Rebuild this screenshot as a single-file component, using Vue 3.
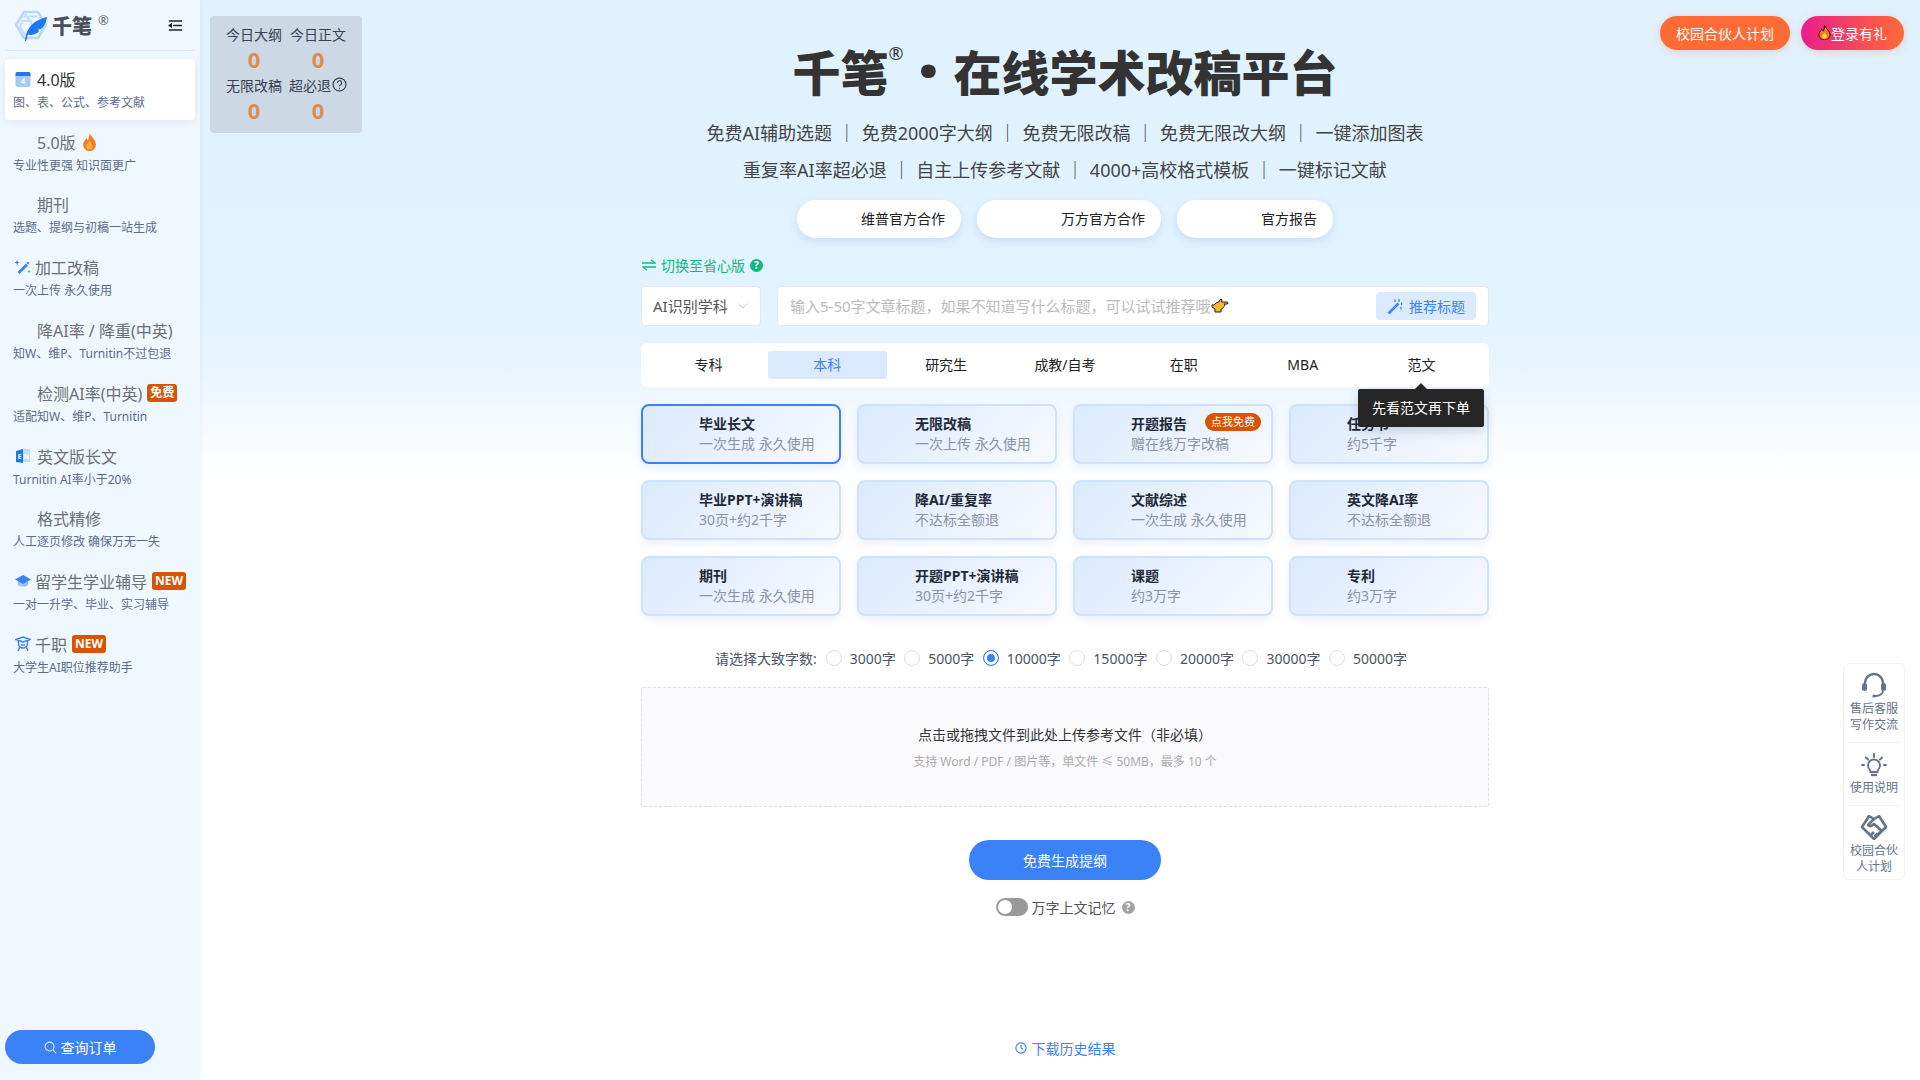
<template>
  <div class="page">
    <!-- sidebar -->
    <aside class="side">
      <div class="side__head">
        <svg class="side__logo" viewBox="0 0 32 32" width="32" height="32">
          <path d="M9 3h14l8 13-8 13H9L1 16z" fill="none" stroke="#b9d6fb" stroke-width="2.600" />
          <path d="M8 7.500h15M6 12h11M4.500 17l6 9M10 5l7 10M8 12l-3 5" fill="none" stroke="#c5ddfb" stroke-width="2.200" />
          <path d="M10 32c1-11 6-20 22-24-1 6-3 10-6 12l-3 .5 1 2c-3 3-8 4-11 3l-2 6.500z" fill="#1c78f0" />
        </svg>
        <span class="side__brand">千笔</span>
        <span class="side__reg">®</span>
        <svg class="side__fold" viewBox="0 0 14 11" width="14" height="11">
          <path d="M1 1h13M5 5.500h9M1 10h13" stroke="#222" stroke-width="1.600" fill="none" />
          <path d="M0 5.500 4 2.800v5.400z" fill="#222" />
        </svg>
      </div>

      <div
        v-for="item in navItems"
        :key="item.title"
        class="nav"
        :class="{ 'nav--active': item.active }"
      >
        <div class="nav__title">
          <span class="nav__icon" :class="{ 'nav__icon--tight': item.tight }">
            <svg v-if="item.icon === 'cal'" viewBox="0 0 16 16" width="16" height="16">
              <rect x="0.500" y="1" width="15" height="15" rx="2" fill="#a3caff" />
              <path d="M.5 3a2 2 0 0 1 2-2h11a2 2 0 0 1 2 2v2H.5z" fill="#1c78f0" />
              <text x="8" y="13" text-anchor="middle" font-size="8" font-weight="700" fill="#fff">4</text>
            </svg>
            <svg v-else-if="item.icon === 'wand'" viewBox="0 0 16 16" width="16" height="16">
              <path d="M2.500 14.500 11 6l2 2-8.500 8.500z" fill="#3b82f6" transform="translate(0 -1.500)" />
              <path d="M11.500 4 13 2.500l1.500 1.500L13 5.500zM2 1l.8 1.700L4.500 3.500l-1.700.8L2 6l-.8-1.700L-.5 3.500l1.700-.8zM14 11l.5 1 1 .5-1 .5-.5 1-.5-1-1-.5 1-.5z" fill="#3b82f6" />
            </svg>
            <svg v-else-if="item.icon === 'en'" viewBox="0 0 16 16" width="16" height="16">
              <path d="M1 3l7-2v14l-7-1z" fill="#1c78f0" />
              <path d="M8 1h7v13H8z" fill="#c3dcff" />
              <text x="4.500" y="11" text-anchor="middle" font-size="6.500" font-weight="700" fill="#fff">E</text>
              <text x="11.500" y="11" text-anchor="middle" font-size="6.500" font-weight="700" fill="#fff">N</text>
            </svg>
            <svg v-else-if="item.icon === 'cap'" viewBox="0 0 16 16" width="16" height="16">
              <path d="M3 8v4c1.500 2 8.500 2 10 0V8z" fill="#9cc3fb" />
              <path d="M8 2 16 6.500 8 11 0 6.500z" fill="#3b82f6" />
            </svg>
            <svg v-else-if="item.icon === 'job'" viewBox="0 0 16 16" width="16" height="16" fill="none" stroke="#3b82f6" stroke-width="1.500">
              <path d="M1 3.500 8 1l7 2.500L8 6z" />
              <path d="M3.500 5v2.500c0 2.500 2 4.500 4.500 4.500s4.500-2 4.500-4.500V5" />
              <path d="M5 10.500 3 15M11 10.500l2 4.500M6 9h4" />
            </svg>
          </span>
          <span class="nav__name">{{ item.title }}</span>
          <svg v-if="item.flame" class="nav__flame" viewBox="0 0 14 17" width="15" height="18">
            <path d="M7 0c1 3 6 6 6 11a6 6 0 0 1-12 0c0-3 2-4 3-6 1 1 1 2 1.500 2C6.500 5 7 3 7 0z" fill="#fb7a1d" />
            <path d="M7 7c1 2 3 3 3 5.500a3 3 0 0 1-6 0C4 10 6 9 7 7z" fill="#ffae3b" />
          </svg>
          <span v-if="item.badge" class="nav__badge">{{ item.badge }}</span>
        </div>
        <p class="nav__sub">{{ item.sub }}</p>
      </div>

      <button class="side__order">
        <svg viewBox="0 0 14 14" width="13" height="13" fill="none" stroke="#dbe9ff" stroke-width="1.200">
          <circle cx="6" cy="6" r="4.800" />
          <path d="m9.500 9.500 3.500 3.500" />
        </svg>
        查询订单
      </button>
    </aside>

    <!-- main -->
    <main class="main">
      <div class="stats">
        <template v-for="s in stats" :key="s.label">
          <div class="stats__cell">
            <span class="stats__label">
              {{ s.label }}
              <svg v-if="s.help" class="stats__help" viewBox="0 0 14 14" width="15" height="15" fill="none" stroke="#374151" stroke-width="1.100">
                <circle cx="7" cy="7" r="6" />
                <path d="M5 5.500a2 2 0 1 1 3 1.700c-.7.400-1 .800-1 1.500" />
                <path d="M7 10v1" />
              </svg>
            </span>
            <span class="stats__num">0</span>
          </div>
        </template>
      </div>

      <div class="actions">
        <button class="actions__btn actions__btn--orange">校园合伙人计划</button>
        <button class="actions__btn actions__btn--login">
          <svg viewBox="0 0 14 16" width="13" height="15">
            <path d="M7 .5c1 3 6 6 6 10a6 5.500 0 0 1-12 0c0-3 2-4 3-6 1 1 1 2 1.500 2C6.500 5 7 3 7 .5z" fill="#f4781f" stroke="#2a1208" stroke-width="1" />
            <path d="M7 8c1 1.500 2.500 2 2.500 4a2.500 2.500 0 0 1-5 0C4.500 10 6 9.500 7 8z" fill="#ffd23f" />
          </svg>
          登录有礼
        </button>
      </div>

      <div class="col">
        <h1 class="hero">千笔<sup class="hero__reg">®</sup><span class="hero__dot">·</span>在线学术改稿平台</h1>
        <p class="slogan slogan--first">免费AI辅助选题 ｜ 免费2000字大纲 ｜ 免费无限改稿 ｜ 免费无限改大纲 ｜ 一键添加图表</p>
        <p class="slogan">重复率AI率超必退 ｜ 自主上传参考文献 ｜ 4000+高校格式模板 ｜ 一键标记文献</p>

        <div class="pills">
          <div class="pill pill--a">维普官方合作</div>
          <div class="pill pill--b">万方官方合作</div>
          <div class="pill pill--b">官方报告</div>
        </div>

        <div class="swap">
          <svg viewBox="0 0 14 12" width="14" height="12" fill="none" stroke="#10b981" stroke-width="1.400">
            <path d="M0 4h13L9 .8M14 8H1l4 3.200" />
          </svg>
          <span>切换至省心版</span>
          <span class="swap__help">?</span>
        </div>

        <div class="inputs">
          <div class="select">
            <span>AI识别学科</span>
            <svg viewBox="0 0 10 6" width="10" height="6" fill="none" stroke="#c0c4cc" stroke-width="1">
              <path d="m.5.500 4.500 4.500L9.500.500" />
            </svg>
          </div>
          <div class="title-input">
            <span class="title-input__ph">输入5-50字文章标题，如果不知道写什么标题，可以试试推荐哦</span>
            <svg viewBox="0 0 18 14" width="18" height="14">
              <path d="M1 6h2l2-2 3-1 1-2.500h2L10.500 3h5.500c1.500 0 1.500 2 0 2h-3l1 1c0 1-1 1-1 1.500s-1 1-1 1.500-1 1-2 1v3H4V10L1 8z" fill="#f5b82e" stroke="#222" stroke-width="1" />
            </svg>
            <button class="title-input__btn">
              <svg viewBox="0 0 16 16" width="16" height="16" fill="none" stroke="#3b82f6" stroke-width="1.300">
                <path d="m1.500 14.500 9-9 1 1-9 9z" />
                <path d="M12 1.500v2M14.500 5v1.500M8 2v1.500M14 9.500v1.500" stroke-linecap="round" />
              </svg>
              推荐标题
            </button>
          </div>
        </div>

        <div class="tabs">
          <div
            v-for="t in tabs"
            :key="t"
            class="tab"
            :class="{ 'tab--active': t === '本科' }"
          >{{ t }}</div>
          <div class="tip">先看范文再下单</div>
        </div>

        <div class="cards">
          <div
            v-for="c in cards"
            :key="c.title"
            class="card"
            :class="{ 'card--active': c.active }"
          >
            <strong class="card__title">{{ c.title }}</strong>
            <span class="card__sub">{{ c.sub }}</span>
            <span v-if="c.chip" class="card__chip">{{ c.chip }}</span>
          </div>
        </div>

        <div class="words">
          <span class="words__label">请选择大致字数:</span>
          <div v-for="w in wordCounts" :key="w" class="radio">
            <span class="radio__dot" :class="{ 'radio__dot--on': w === 10000 }"></span>
            <span>{{ w }}字</span>
          </div>
        </div>

        <div class="upload">
          <p class="upload__main">点击或拖拽文件到此处上传参考文件（非必填）</p>
          <p class="upload__hint">支持 Word / PDF / 图片等，单文件 ≤ 50MB，最多 10 个</p>
        </div>

        <button class="go">免费生成提纲</button>

        <div class="memory">
          <span class="memory__toggle"><i></i></span>
          <span>万字上文记忆</span>
          <span class="memory__help">?</span>
        </div>

        <div class="history">
          <svg viewBox="0 0 14 14" width="12" height="12" fill="none" stroke="#3b82f6" stroke-width="1.300">
            <circle cx="7" cy="7" r="6" />
            <path d="M7 3.500V7l2.500 1.500" />
          </svg>
          下载历史结果
        </div>
      </div>

      <!-- right floating tools -->
      <div class="tools">
        <div class="tools__item">
          <svg viewBox="0 0 26 26" width="26" height="26" fill="none">
            <path d="M4 14V11a9 9 0 0 1 18 0v3" stroke="#64748b" stroke-width="2.400" />
            <rect x="1" y="11" width="5" height="8" rx="2.500" fill="#64748b" />
            <rect x="20" y="11" width="5" height="8" rx="2.500" fill="#64748b" />
            <path d="M22 18c0 4-3 6-8 6" stroke="#64748b" stroke-width="1.800" />
            <circle cx="13" cy="24" r="1.600" fill="#64748b" />
          </svg>
          <span>售后客服<br />写作交流</span>
        </div>
        <div class="tools__item">
          <svg viewBox="0 -2 26 26" width="26" height="26" fill="none" stroke="#64748b">
            <path d="M9.500 19c0-2.500-2.500-3.500-2.500-6.500a6 6 0 0 1 12 0c0 3-2.500 4-2.500 6.500z" stroke-width="1.800" />
            <path d="M10 22h6" stroke-width="2.400" />
            <path d="M13 1v3M3 12H1M25 12h-2M5 4.500l2 2M21 4.500l-2 2" stroke-width="2" stroke-linecap="round" />
          </svg>
          <span>使用说明</span>
        </div>
        <div class="tools__item">
          <svg viewBox="0 0 28 26" width="28" height="26" fill="none" stroke="#64748b" stroke-width="2.600" stroke-linejoin="round">
            <path d="M14 25 2 13 9 2l5 3 5-3 7 11z" />
            <path d="M14 5 8 11c2 2 4 1 6-1l8 7M11 21l3-3M14.500 22.500l3-3M18 20l3-2.500" />
          </svg>
          <span>校园合伙<br />人计划</span>
        </div>
      </div>
    </main>
  </div>
</template>

<script setup>
const navItems = [
  { title: '4.0版', sub: '图、表、公式、参考文献', icon: 'cal', active: true },
  { title: '5.0版', sub: '专业性更强 知识面更广', flame: true },
  { title: '期刊', sub: '选题、提纲与初稿一站生成' },
  { title: '加工改稿', sub: '一次上传 永久使用', icon: 'wand', tight: true },
  { title: '降AI率 / 降重(中英)', sub: '知W、维P、Turnitin不过包退' },
  { title: '检测AI率(中英)', sub: '适配知W、维P、Turnitin', badge: '免费' },
  { title: '英文版长文', sub: 'Turnitin AI率小于20%', icon: 'en' },
  { title: '格式精修', sub: '人工逐页修改 确保万无一失' },
  { title: '留学生学业辅导', sub: '一对一升学、毕业、实习辅导', icon: 'cap', badge: 'NEW', tight: true },
  { title: '千职', sub: '大学生AI职位推荐助手', icon: 'job', badge: 'NEW', tight: true },
]

const stats = [
  { label: '今日大纲' },
  { label: '今日正文' },
  { label: '无限改稿' },
  { label: '超必退', help: true },
]

const tabs = ['专科', '本科', '研究生', '成教/自考', '在职', 'MBA', '范文']

const cards = [
  { title: '毕业长文', sub: '一次生成 永久使用', active: true },
  { title: '无限改稿', sub: '一次上传 永久使用' },
  { title: '开题报告', sub: '赠在线万字改稿', chip: '点我免费' },
  { title: '任务书', sub: '约5千字' },
  { title: '毕业PPT+演讲稿', sub: '30页+约2千字' },
  { title: '降AI/重复率', sub: '不达标全额退' },
  { title: '文献综述', sub: '一次生成 永久使用' },
  { title: '英文降AI率', sub: '不达标全额退' },
  { title: '期刊', sub: '一次生成 永久使用' },
  { title: '开题PPT+演讲稿', sub: '30页+约2千字' },
  { title: '课题', sub: '约3万字' },
  { title: '专利', sub: '约3万字' },
]

const wordCounts = [3000, 5000, 10000, 15000, 20000, 30000, 50000]
</script>

<style>
html, body { margin: 0; background: #fff; }
</style>

<style scoped>
.page {
  display: flex;
  width: 1920px;
  height: 1080px;
  overflow: hidden;
  font-family: "Noto Sans", "Noto Sans CJK SC", sans-serif;
  font-size: 14px;
  color: #333;
}
p, h1 { margin: 0; }
button { font-family: inherit; border: none; cursor: pointer; }

/* sidebar */
.side {
  width: 200px;
  flex: none;
  box-sizing: border-box;
  padding: 0 5px 16px;
  display: flex;
  flex-direction: column;
  gap: 1.800px;
  background: #f0f8ff;
  box-shadow: 1px 0 4px rgba(0, 0, 0, 0.04);
  z-index: 1;
}
.side__head {
  display: flex;
  align-items: center;
  height: 50px;
  flex: none;
  margin-bottom: 6px;
  padding-left: 10px;
  border-bottom: 1px solid #e3e8ee;
}
.side__brand { margin-left: 5px; font-size: 20px; font-weight: 900; color: #4a4f57; }
.side__reg { margin: -10px 0 0 6px; font-size: 13px; color: #666; }
.side__fold { margin-left: auto; margin-right: 13px; }

.nav {
  height: 61px;
  flex: none;
  box-sizing: border-box;
  padding: 8px 8px 0;
  border-radius: 4px;
}
.nav--active {
  background: #fff;
  box-shadow: 0 2px 8px rgba(80, 110, 150, 0.12);
}
.nav__title {
  display: flex;
  align-items: center;
  height: 24px;
  font-size: 16px;
  color: #6b6f76;
  white-space: nowrap;
}
.nav--active .nav__title { color: #333; }
.nav__icon { display: flex; width: 24px; height: 16px; flex: none; margin-left: 2px; margin-right: -2px; }
.nav__icon--tight { margin-right: -4px; margin-left: 2px; }
.nav__flame { margin-left: 6px; }
.nav__badge {
  margin-left: 5px;
  padding: 0 3px;
  height: 18px;
  line-height: 18px;
  border-radius: 3px;
  background: #d95300;
  color: #fff;
  font-size: 12px;
  font-weight: 700;
}
.nav__sub {
  margin-top: 3px;
  font-size: 12px;
  line-height: 18px;
  color: #5b6b8c;
  white-space: nowrap;
}
.side__order {
  margin-top: auto;
  width: 150px;
  height: 34px;
  flex: none;
  display: flex;
  align-items: center;
  justify-content: center;
  gap: 4px;
  padding-bottom: 1px;
  border-radius: 17px;
  background: #3b82f6;
  color: #fff;
  font-size: 14px;
}

/* main */
.main {
  position: relative;
  flex: 1;
  background: linear-gradient(180deg, #e0f2fe 0, #e2f3ff 300px, #e6f4ff 360px, #f0f8ff 400px, #f9fcff 445px, #fff 490px);
}
.col {
  width: 848px;
  margin-left: 441px;
  display: flex;
  flex-direction: column;
  align-items: center;
}

.stats {
  position: absolute;
  left: 10px;
  top: 16px;
  width: 152px;
  height: 117px;
  box-sizing: border-box;
  padding: 5px 0 0;
  display: grid;
  grid-template-columns: 64px 64px;
  justify-content: center;
  align-content: start;
  border-radius: 4px;
  background: #ccd9e5;
}
.stats__cell { display: flex; flex-direction: column; align-items: center; }
.stats__label { display: flex; align-items: center; height: 25px; color: #374151; white-space: nowrap; }
.stats__help { margin-left: 1px; }
.stats__num { height: 25px; line-height: 25px; margin-top: 1px; font-size: 22px; font-weight: 700; color: #e08a4e; }

.actions {
  position: absolute;
  right: 16px;
  top: 16px;
  display: flex;
  gap: 11px;
}
.actions__btn {
  height: 34px;
  display: flex;
  align-items: center;
  justify-content: center;
  padding-bottom: 2px;
  border-radius: 17px;
  color: #fff;
  font-size: 14px;
  box-shadow: 0 2px 8px rgba(255, 107, 53, 0.25);
}
.actions__btn--orange { width: 130px; background: #ff6b35; }
.actions__btn--login { width: 103px; background: linear-gradient(90deg, #e91e8c, #ff6b35); }

.hero {
  margin-top: 43px;
  height: 60px;
  line-height: 60px;
  font-size: 48px;
  font-weight: 900;
  color: #333;
  white-space: nowrap;
}
.hero__reg {
  display: inline-block;
  width: 15px;
  font-size: 18px;
  font-weight: 400;
  line-height: 0;
  vertical-align: 31px;
}
.hero__dot {
  display: inline-block;
  width: 50px;
  line-height: 0;
  text-align: center;
  font-size: 72px;
  vertical-align: -6px;
}
.slogan { font-size: 18px; line-height: 37px; color: #444; white-space: nowrap; word-spacing: 1.100px; }
.slogan--first { margin-top: 12px; }

.pills { display: flex; gap: 16px; margin-top: 11px; }
.pill {
  height: 38px;
  line-height: 38px;
  padding-right: 16px;
  border-radius: 19px;
  background: #fff;
  color: #222;
  box-shadow: 0 3px 8px rgba(70, 110, 160, 0.16);
}
.pill--a { padding-left: 64px; }
.pill--b { padding-left: 84px; }

.swap {
  align-self: flex-start;
  display: flex;
  align-items: center;
  gap: 5px;
  height: 20px;
  margin-top: 17px;
  margin-left: 1px;
  color: #10b981;
}
.swap__help, .memory__help {
  width: 13px;
  height: 13px;
  line-height: 13px;
  border-radius: 50%;
  text-align: center;
  color: #fff;
  font-size: 10px;
  font-weight: 700;
}
.swap__help { background: #10b981; }

.inputs { width: 100%; display: flex; gap: 16px; margin-top: 11px; }
.select, .title-input {
  height: 40px;
  box-sizing: border-box;
  display: flex;
  align-items: center;
  background: #fff;
  border: 1px solid #e4e7ed;
  border-radius: 4px;
  font-size: 15px;
}
.select span, .title-input__ph { margin-top: -2px; }
.select {
  width: 120px;
  flex: none;
  padding: 0 12px 0 11px;
  justify-content: space-between;
  color: #555;
  white-space: nowrap;
}
.title-input { flex: 1; padding: 0 12px; color: #bbb; white-space: nowrap; }
.title-input__btn {
  margin-left: auto;
  width: 100px;
  height: 28px;
  display: flex;
  align-items: center;
  justify-content: center;
  gap: 6px;
  padding-bottom: 1px;
  border-radius: 4px;
  background: #dbeafe;
  color: #3b82f6;
  font-size: 14px;
}

.tabs {
  position: relative;
  width: 100%;
  height: 44px;
  margin-top: 17px;
  box-sizing: border-box;
  padding: 8px;
  display: grid;
  grid-template-columns: repeat(7, 1fr);
  background: #fff;
  border-radius: 6px;
}
.tab { line-height: 28px; text-align: center; color: #222; border-radius: 3px; }
.tab--active { background: #dbeafe; color: #3b82f6; }
.tip {
  position: absolute;
  z-index: 3;
  right: 5px;
  top: 46px;
  width: 126px;
  height: 38px;
  line-height: 38px;
  text-align: center;
  border-radius: 2px;
  background: #262626;
  color: #fff;
  box-shadow: 0 4px 12px rgba(0, 0, 0, 0.15);
}
.tip::before {
  content: "";
  position: absolute;
  top: -6px;
  left: 57px;
  border: 6px solid transparent;
  border-top: none;
  border-bottom-color: #262626;
}

.cards {
  width: 100%;
  margin-top: 17px;
  display: grid;
  grid-template-columns: repeat(4, 1fr);
  gap: 16px;
}
.card {
  position: relative;
  height: 60px;
  box-sizing: border-box;
  padding-left: 56px;
  display: flex;
  flex-direction: column;
  justify-content: center;
  border: 2px solid #cfe2fd;
  border-radius: 8px;
  background: linear-gradient(135deg, #dbeafe, #f7faff);
  box-shadow: 0 4px 8px rgba(59, 130, 246, 0.1);
}
.card--active { border-color: #3b82f6; }
.card__title { line-height: 20px; color: #1f2937; white-space: nowrap; }
.card__sub { line-height: 20px; color: #8a93a3; white-space: nowrap; }
.card__chip {
  position: absolute;
  right: 10px;
  top: 7px;
  width: 56px;
  height: 18px;
  line-height: 18px;
  text-align: center;
  border-radius: 9px;
  background: #d95300;
  color: #fff;
  font-size: 11px;
}

.words {
  display: flex;
  align-items: center;
  height: 20px;
  margin-top: 32px;
  padding-right: 8px;
  color: #4b5563;
}
.words__label { margin-right: 9px; }
.radio { display: flex; align-items: center; gap: 8px; margin-right: 8.500px; color: #4b5563; }
.radio:last-child { margin-right: 0; }
.radio__dot {
  width: 16px;
  height: 16px;
  box-sizing: border-box;
  border: 1px solid #dcdfe6;
  border-radius: 50%;
  background: #fff;
}
.radio__dot--on { border-color: #3b82f6; box-shadow: inset 0 0 0 3px #fff; background: #3b82f6; }

.upload {
  width: 100%;
  height: 120px;
  margin-top: 19px;
  box-sizing: border-box;
  padding-top: 37px;
  border: 1px dashed #dcdfe6;
  border-radius: 2px;
  background: #fafafc;
  text-align: center;
}
.upload__main { line-height: 20px; color: #333; }
.upload__hint { margin-top: 7px; font-size: 12px; line-height: 20px; color: #aaa; }

.go {
  width: 192px;
  height: 40px;
  flex: none;
  margin-top: 33px;
  border-radius: 20px;
  background: #3b82f6;
  color: #fff;
  font-size: 14px;
}

.memory {
  display: flex;
  align-items: center;
  gap: 4px;
  height: 20px;
  margin-top: 17px;
  color: #555;
}
.memory__toggle {
  width: 32px;
  height: 18px;
  box-sizing: border-box;
  padding: 2px;
  border-radius: 9px;
  background: #999;
}
.memory__toggle i { display: block; width: 14px; height: 14px; border-radius: 50%; background: #fff; }
.memory__help { margin-left: 2px; background: #a3a3a3; }

.history {
  display: flex;
  align-items: center;
  gap: 5px;
  height: 20px;
  margin-top: 121px;
  color: #3b82f6;
}

.tools {
  position: absolute;
  right: 15px;
  top: 663px;
  width: 62px;
  height: 217px;
  box-sizing: border-box;
  display: flex;
  flex-direction: column;
  border: 1px solid #f1f3f6;
  border-radius: 6px;
  background: #fff;
}
.tools__item {
  display: flex;
  flex-direction: column;
  align-items: center;
  padding: 8px 0 9px;
  margin: 0 4px;
  font-size: 12px;
  line-height: 16px;
  color: #64748b;
  text-align: center;
  border-bottom: 1px solid #f1f3f6;
  white-space: nowrap;
}
.tools__item:last-child { border-bottom: none; }
.tools__item svg { margin-bottom: 3px; }
</style>
